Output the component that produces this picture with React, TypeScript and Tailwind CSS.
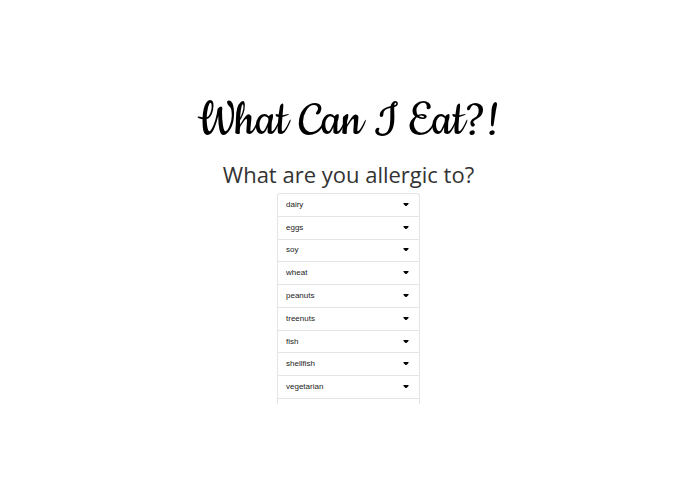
import { useState } from 'react';

const ALLERGENS = ['dairy', 'eggs', 'soy', 'wheat', 'peanuts', 'treenuts', 'fish', 'shellfish', 'vegetarian'];

interface AllergenRowProps {
  name: string;
  selected: boolean;
  onToggle: () => void;
}

function AllergenRow({ name, selected, onToggle }: AllergenRowProps) {
  return (
    <li className="border-b border-[#e4e4e4]">
      <button
        type="button"
        aria-pressed={selected}
        onClick={onToggle}
        className="flex h-full w-full items-center justify-between pr-[10px] pl-2 text-[8px] leading-3 text-[#222222]"
      >
        {name}
        <svg viewBox="0 0 12 8" className="h-1 w-1.5 text-black" aria-hidden="true">
          <path d="M1 0h10v2L7 6H5L1 2z" fill="currentColor" />
        </svg>
      </button>
    </li>
  );
}

export default function App() {
  const [selected, setSelected] = useState<string[]>([]);

  const toggle = (name: string) => {
    setSelected(prev => (prev.includes(name) ? prev.filter(n => n !== name) : [...prev, name]));
  };

  return (
    <main className="flex min-h-screen flex-col items-center bg-white pt-24 pl-0.5 font-['Liberation_Sans',sans-serif]">
      <h1 className="font-['Cookie','Norican','Liberation_Serif',cursive] text-[55px] leading-[52px] text-black">
        What Can I Eat?!
      </h1>
      <h2 className="mt-2 font-['Open_Sans',sans-serif] text-[22px] leading-9 text-[#333333]">
        What are you allergic to?
      </h2>
      <div className="mt-px w-[143px] rounded-t-[3px] border border-b-0 border-[#e4e4e4] pb-[5px]">
        <ul className="grid h-[205px] grid-rows-9">
          {ALLERGENS.map(name => (
            <AllergenRow key={name} name={name} selected={selected.includes(name)} onToggle={() => toggle(name)} />
          ))}
        </ul>
      </div>
    </main>
  );
}
